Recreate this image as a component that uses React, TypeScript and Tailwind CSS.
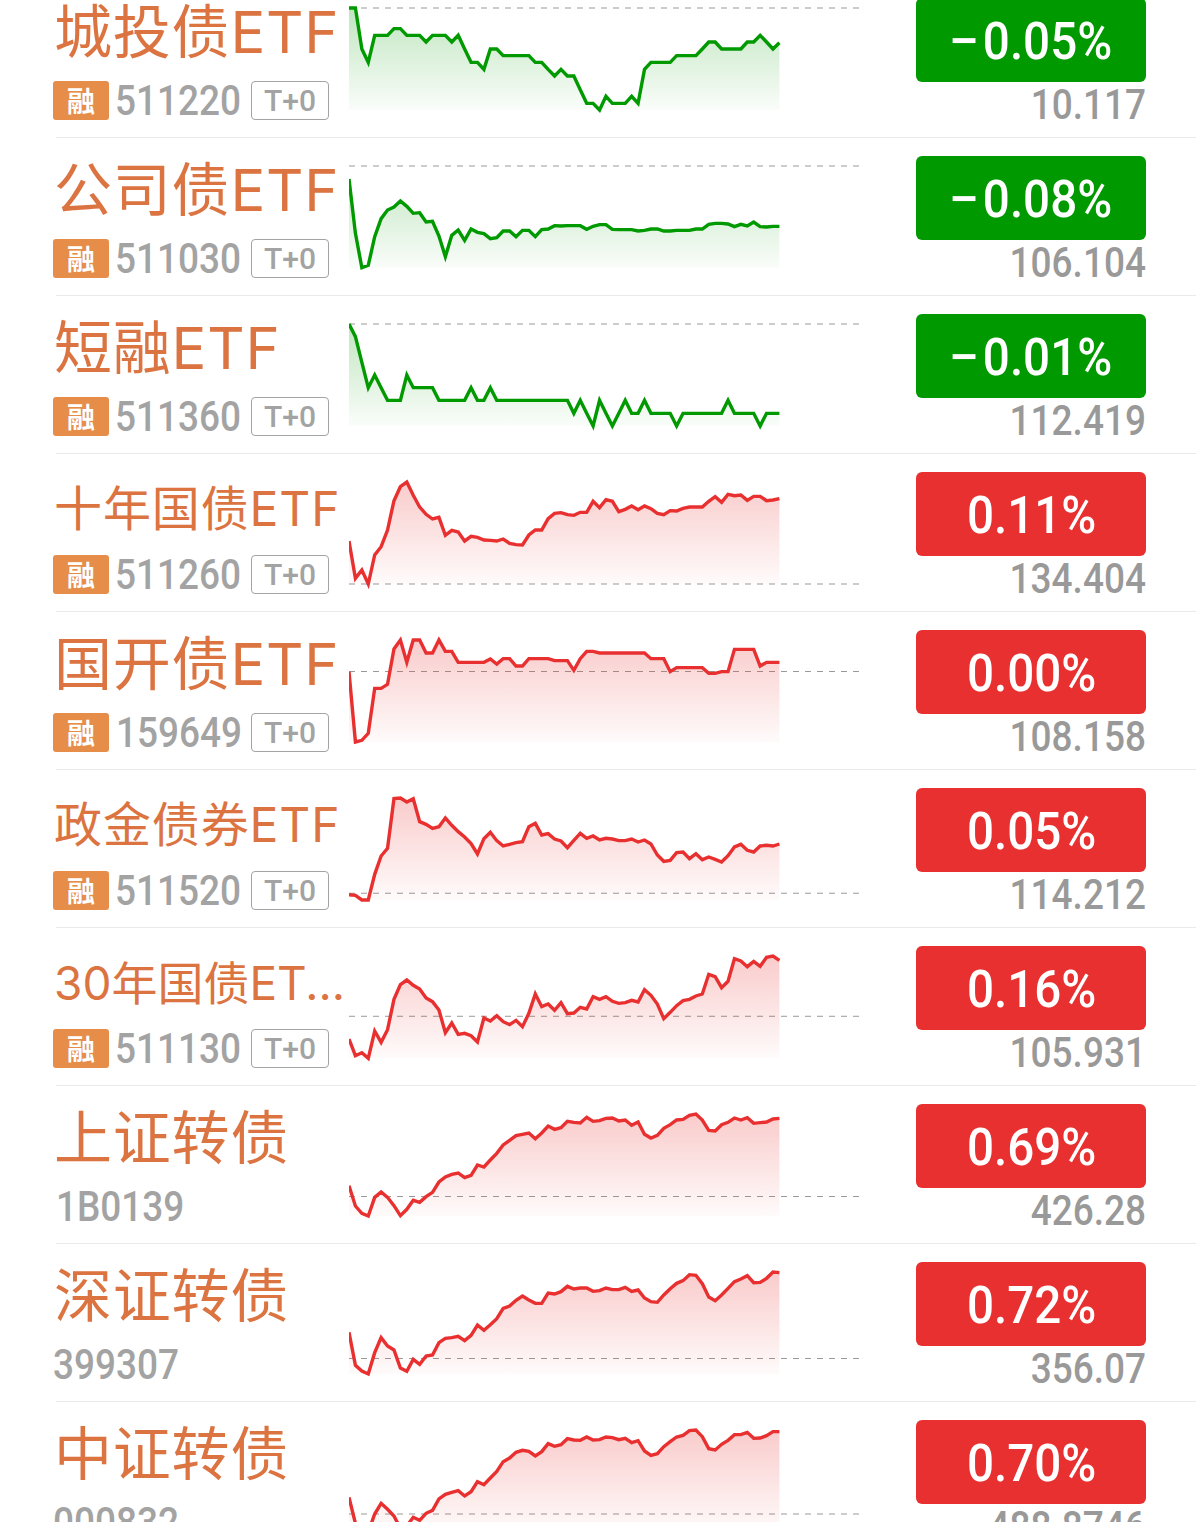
import { clsx } from "clsx";

type Quote = {
  name: string;
  nameClass: string;
  code: string;
  codeClass: string;
  margin: boolean;
  change: string;
  price: string;
  top: number;
  base: number;
  points: number[];
};

const CHART_WIDTH = 511;
const ROW_HEIGHT = 157;
const PLOT_TOP = 28;
const PLOT_BOTTOM = 130;
const STEP = 6.424;

const quotes: Quote[] = [
  {
    name: "城投债ETF",
    nameClass: "text-[58px] tracking-[0.8px]",
    code: "511220",
    codeClass: "",
    margin: true,
    change: "−0.05%",
    price: "10.117",
    top: 24,
    base: 24,
    points: [
      24, 24, 147, 187, 106, 106, 106, 86, 86, 106, 106, 106, 126, 106, 106,
      106, 126, 106, 147, 187, 187, 208, 147, 147, 167, 167, 167, 167, 167, 187,
      187, 208, 228, 208, 228, 228, 269, 310, 310, 330, 289, 310, 310, 310, 289,
      310, 208, 187, 187, 187, 187, 167, 167, 167, 167, 147, 126, 126, 147, 147,
      147, 147, 126, 126, 106, 126, 147, 128,
    ],
  },
  {
    name: "公司债ETF",
    nameClass: "text-[58px] tracking-[0.8px]",
    code: "511030",
    codeClass: "",
    margin: true,
    change: "−0.08%",
    price: "106.104",
    top: 48,
    base: 48,
    points: [
      87, 250, 353, 346, 260, 206, 180, 171, 153, 169, 190, 188, 216, 214, 258,
      320, 256, 240, 271, 237, 247, 251, 266, 263, 243, 243, 260, 241, 241, 260,
      239, 237, 227, 228, 227, 227, 227, 238, 229, 224, 224, 238, 239, 239, 239,
      243, 241, 237, 237, 243, 243, 241, 241, 241, 237, 237, 223, 220, 220, 222,
      230, 223, 228, 216, 230, 231, 229, 229,
    ],
  },
  {
    name: "短融ETF",
    nameClass: "text-[58px] tracking-[0.8px]",
    code: "511360",
    codeClass: "",
    margin: true,
    change: "−0.01%",
    price: "112.419",
    top: 42,
    base: 42,
    points: [
      42, 80, 157, 233, 195, 233, 271, 271, 271, 195, 233, 233, 233, 233, 271,
      271, 271, 271, 271, 233, 271, 271, 233, 271, 271, 271, 271, 271, 271, 271,
      271, 271, 271, 271, 271, 310, 271, 310, 348, 271, 310, 348, 310, 271, 310,
      310, 271, 310, 310, 310, 310, 348, 310, 310, 310, 310, 310, 310, 310, 271,
      310, 310, 310, 310, 348, 310, 310, 310,
    ],
  },
  {
    name: "十年国债ETF",
    nameClass: "pt-1.5 text-[48px] tracking-[0.9px]",
    code: "511260",
    codeClass: "",
    margin: true,
    change: "0.11%",
    price: "134.404",
    top: 36,
    base: 342,
    points: [
      213, 325, 300, 342, 255, 230, 180, 92, 50, 36, 76, 111, 133, 147, 142,
      196, 181, 186, 213, 199, 202, 210, 211, 213, 207, 220, 224, 225, 195, 180,
      180, 146, 130, 128, 134, 136, 127, 127, 94, 113, 89, 94, 125, 118, 108,
      119, 108, 116, 130, 134, 122, 123, 115, 111, 111, 111, 94, 80, 97, 73, 77,
      75, 91, 79, 79, 92, 90, 86,
    ],
  },
  {
    name: "国开债ETF",
    nameClass: "text-[58px] tracking-[0.8px]",
    code: "159649",
    codeClass: "ml-[1px]",
    margin: true,
    change: "0.00%",
    price: "108.158",
    top: 30,
    base: 124.5,
    points: [
      125, 336, 331, 310, 175, 175, 163, 57, 30, 97, 30, 30, 69, 69, 30, 64, 64,
      97, 97, 97, 97, 97, 87, 102, 86, 86, 108, 108, 86, 86, 86, 86, 92, 92, 92,
      121, 86, 64, 64, 69, 69, 69, 69, 69, 69, 69, 69, 86, 86, 86, 125, 113,
      113, 113, 113, 113, 130, 130, 125, 125, 58, 58, 58, 58, 108, 97, 97, 97,
    ],
  },
  {
    name: "政金债券ETF",
    nameClass: "pt-1.5 text-[48px] tracking-[0.9px]",
    code: "511520",
    codeClass: "",
    margin: true,
    change: "0.05%",
    price: "114.212",
    top: 39,
    base: 324.7,
    points: [
      329, 331, 345, 345, 268, 213, 190, 41, 39, 51, 41, 110, 118, 130, 125, 99,
      121, 140, 156, 176, 207, 161, 142, 167, 183, 178, 173, 170, 125, 115, 150,
      146, 162, 168, 188, 166, 145, 160, 153, 165, 160, 162, 167, 167, 162, 171,
      165, 177, 210, 229, 226, 203, 201, 221, 206, 224, 216, 223, 231, 212, 186,
      178, 196, 201, 183, 181, 183, 177,
    ],
  },
  {
    name: "30年国债ET...",
    nameClass: "pt-1.5 text-[46px] tracking-normal",
    code: "511130",
    codeClass: "",
    margin: true,
    change: "0.16%",
    price: "105.931",
    top: 33,
    base: 213.8,
    points: [
      282, 332, 323, 340, 258, 292, 254, 163, 119, 105, 121, 132, 159, 170, 195,
      263, 234, 268, 265, 272, 291, 219, 228, 212, 230, 239, 226, 245, 205, 147,
      185, 177, 196, 173, 206, 204, 187, 192, 155, 163, 155, 169, 175, 173, 166,
      171, 134, 151, 177, 221, 202, 182, 167, 163, 153, 147, 88, 95, 128, 109,
      41, 48, 65, 49, 64, 37, 33, 46,
    ],
  },
  {
    name: "上证转债",
    nameClass: "text-[58px] tracking-[0.8px]",
    code: "1B0139",
    codeClass: "ml-[3px]",
    margin: false,
    change: "0.69%",
    price: "426.28",
    top: 42,
    base: 289.5,
    points: [
      257, 318, 340, 348, 292, 276, 292, 317, 347, 328, 301, 307, 290, 277, 246,
      231, 223, 219, 233, 226, 195, 201, 180, 160, 135, 121, 107, 103, 99, 116,
      99, 78, 88, 83, 64, 67, 69, 52, 64, 62, 55, 54, 63, 60, 76, 66, 103, 114,
      106, 85, 74, 60, 58, 46, 42, 60, 91, 93, 74, 67, 54, 60, 53, 70, 68, 66,
      57, 55,
    ],
  },
  {
    name: "深证转债",
    nameClass: "text-[58px] tracking-[0.8px]",
    code: "399307",
    codeClass: "",
    margin: false,
    change: "0.72%",
    price: "356.07",
    top: 36,
    base: 295.5,
    points: [
      217, 316, 333, 342, 278, 233, 258, 270, 324, 334, 298, 313, 288, 285, 248,
      235, 233, 229, 242, 226, 195, 211, 194, 176, 145, 138, 121, 108, 120, 130,
      130, 99, 102, 95, 79, 87, 84, 84, 94, 92, 84, 89, 89, 82, 94, 90, 114,
      125, 127, 105, 86, 70, 62, 44, 46, 71, 111, 122, 105, 85, 65, 57, 47, 68,
      67, 55, 36, 38,
    ],
  },
  {
    name: "中证转债",
    nameClass: "text-[58px] tracking-[0.8px]",
    code: "000832",
    codeClass: "",
    margin: false,
    change: "0.70%",
    price: "488.8746",
    top: 90,
    base: 342,
    points: [
      292, 370, 385, 396, 342, 310, 328, 348, 385, 378, 352, 361, 340, 331, 297,
      283, 277, 272, 288, 275, 245, 254, 234, 214, 185, 174, 157, 151, 154, 168,
      155, 131, 139, 134, 116, 120, 121, 111, 120, 119, 111, 113, 119, 115, 128,
      122, 153, 166, 161, 140, 125, 111, 106, 92, 90, 110, 146, 150, 133, 121,
      104, 104, 97, 115, 114, 107, 95, 95,
    ],
  },
];

function Sparkline({ quote, down }: { quote: Quote; down: boolean }) {
  const color = down ? "#009900" : "#e93030";
  const id = `fill-${quote.code}`;
  const toY = (v: number) => PLOT_TOP + (v - quote.top) / 3;
  const line = quote.points
    .map((v, i) => `${(i * STEP).toFixed(2)},${toY(v).toFixed(2)}`)
    .join(" ");
  const right = ((quote.points.length - 1) * STEP).toFixed(2);

  return (
    <svg
      width={CHART_WIDTH}
      height={ROW_HEIGHT}
      viewBox={`0 0 ${CHART_WIDTH} ${ROW_HEIGHT}`}
      className="shrink-0"
    >
      <defs>
        <linearGradient
          id={id}
          gradientUnits="userSpaceOnUse"
          x1="0"
          y1={PLOT_TOP}
          x2="0"
          y2={PLOT_BOTTOM}
        >
          <stop offset="0" stopColor={color} stopOpacity="0.25" />
          <stop offset="1" stopColor={color} stopOpacity="0.02" />
        </linearGradient>
      </defs>
      <line
        x1="0"
        x2={CHART_WIDTH}
        y1={toY(quote.base)}
        y2={toY(quote.base)}
        stroke="#999999"
        strokeDasharray="6 6"
      />
      <polygon
        points={`0,${PLOT_BOTTOM} ${line} ${right},${PLOT_BOTTOM}`}
        fill={`url(#${id})`}
      />
      <polyline
        points={line}
        fill="none"
        stroke={color}
        strokeWidth="3.4"
        strokeLinejoin="miter"
      />
    </svg>
  );
}

function QuoteRow({ quote }: { quote: Quote }) {
  const down = quote.change.startsWith("−");

  return (
    <li className="ml-14 flex h-[158px] border-b border-[#e9e9e9]">
      <div className="-ml-[3px] flex w-[296px] shrink-0 flex-col">
        <div
          className={clsx(
            "mt-[17px] flex h-[70px] items-center pl-px font-[Inter,'Noto_Sans_CJK_SC',sans-serif] leading-none whitespace-nowrap text-[#db7441]",
            quote.nameClass
          )}
        >
          {quote.name}
        </div>
        <div className="mt-[14px] flex h-[39px] items-center">
          {quote.margin && (
            <span className="mr-[6px] flex h-[39px] w-14 items-center justify-center rounded-[3px] bg-[#e58d49] pb-px font-['Noto_Sans_CJK_SC',sans-serif] text-[28px] leading-none font-bold text-white">
              融
            </span>
          )}
          <span className="w-[136px] shrink-0">
            <span
              className={clsx(
                "inline-block origin-left scale-x-[0.88] font-[Roboto,sans-serif] text-[42px] leading-none font-medium text-[#a3a3a3]",
                quote.codeClass
              )}
            >
              {quote.code}
            </span>
          </span>
          {quote.margin && (
            <span className="flex h-[39px] w-[78px] items-center justify-center rounded-[4px] border border-[#a3a3a3] font-[Roboto,sans-serif] text-[30px] leading-none font-medium text-[#a3a3a3]">
              T+0
            </span>
          )}
        </div>
      </div>
      <Sparkline quote={quote} down={down} />
      <div className="ml-14 flex w-[230px] shrink-0 flex-col items-end pt-[18px] font-[Roboto,sans-serif] leading-none font-medium">
        <div
          className={clsx(
            "flex h-[84px] w-full items-center justify-center rounded-[6px] pt-[3px] pl-[2px] text-[52px] text-white",
            down ? "bg-[#009900]" : "bg-[#e93030]"
          )}
        >
          <span className="inline-block scale-x-[0.915]">
            {down && (
              <span className="mr-[4px] inline-block origin-right scale-x-[1.15]">
                −
              </span>
            )}
            {quote.change.replace("−", "")}
          </span>
        </div>
        <span className="mt-[2px] inline-block origin-right scale-x-[0.88] text-[42px] text-[#999999]">
          {quote.price}
        </span>
      </div>
    </li>
  );
}

export default function App() {
  return (
    <main className="h-[1522px] w-[1196px] overflow-hidden bg-white">
      <ul className="-mt-5">
        {quotes.map((quote) => (
          <QuoteRow key={quote.code} quote={quote} />
        ))}
      </ul>
    </main>
  );
}
